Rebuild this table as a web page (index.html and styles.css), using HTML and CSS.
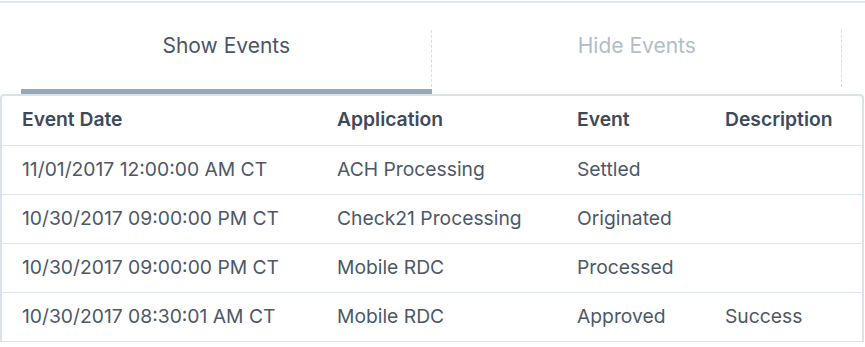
FILE: index.html
```html
<!DOCTYPE html>
<html>
<head>
<meta charset="utf-8">
<link rel="stylesheet" href="styles.css">
</head>
<body>
<div class="top-rule"></div>
<div class="tabs">
  <div class="tab active">Show Events</div>
  <div class="tab">Hide Events</div>
</div>
<div class="panel">
  <table class="events">
    <colgroup>
      <col class="c1"><col class="c2"><col class="c3"><col class="c4">
    </colgroup>
    <thead>
      <tr><th>Event Date</th><th>Application</th><th>Event</th><th>Description</th></tr>
    </thead>
    <tbody>
      <tr><td>11/01/2017 12:00:00 AM CT</td><td>ACH Processing</td><td>Settled</td><td></td></tr>
      <tr><td>10/30/2017 09:00:00 PM CT</td><td>Check21 Processing</td><td>Originated</td><td></td></tr>
      <tr><td>10/30/2017 09:00:00 PM CT</td><td>Mobile RDC</td><td>Processed</td><td></td></tr>
      <tr><td>10/30/2017 08:30:01 AM CT</td><td>Mobile RDC</td><td>Approved</td><td>Success</td></tr>
    </tbody>
  </table>
</div>
</body>
</html>
```
FILE: styles.css
```css
html, body {
  margin: 0;
  padding: 0;
  background: #fff;
  overflow: hidden;
}
body {
  font-family: Inter, Lato, sans-serif;
  color: #4a5667;
}
.top-rule {
  margin-top: 1px;
  height: 2px;
  background: #dfe6ef;
}
.tabs {
  display: flex;
  margin: 0 23px 0 21px;
  height: 91px;
}
.tab {
  position: relative;
  flex: 1;
  display: flex;
  align-items: center;
  justify-content: center;
  padding-bottom: 1px;
  font-size: 21px;
  color: #b1bdc9;
  border-bottom: 5px solid transparent;
}
.tab::after {
  content: "";
  position: absolute;
  right: 0;
  top: 27px;
  bottom: 2px;
  border-right: 1px dashed #d6dde5;
}
.tab.active {
  color: #4a5668;
  border-bottom-color: #95aab8;
}
.panel {
  margin-right: 1px;
  border: 2px solid #d9e3ee;
  border-bottom: none;
  border-radius: 4px 4px 0 0;
}
.events {
  width: 100%;
  border-collapse: collapse;
  table-layout: fixed;
  font-size: 19.3px;
}
.c1 { width: 315px; }
.c2 { width: 240px; }
.c3 { width: 148px; }
.events th, .events td {
  text-align: left;
  padding: 0 0 2px 20px;
  white-space: nowrap;
  border-bottom: 1px solid #dde5ee;
  box-sizing: border-box;
}
.events th {
  height: 49px;
  font-weight: 600;
  color: #3e4a5b;
}
.events td {
  height: 49px;
  color: #4d5868;
}
```
